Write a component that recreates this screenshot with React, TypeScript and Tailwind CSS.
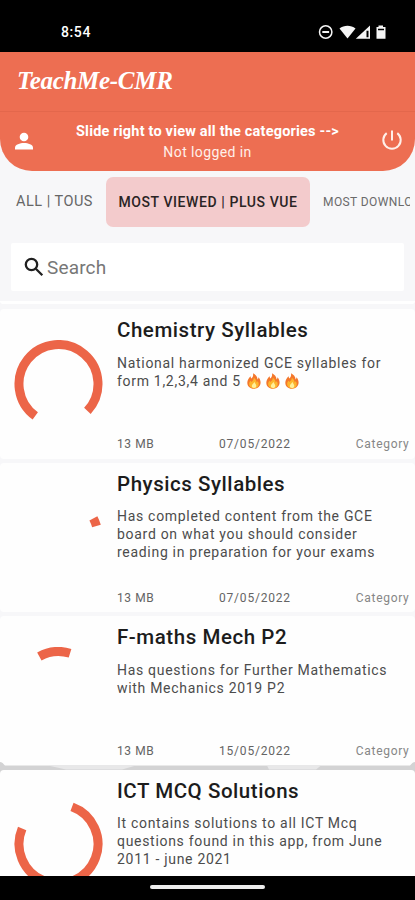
import React from "react";

type Resource = {
  title: string;
  lines: string[];
  flames?: number;
  size?: string;
  date?: string;
  arc: [number, number];
};

const resources: Resource[] = [
  {
    title: "Chemistry Syllables",
    lines: ["National harmonized GCE syllables for", "form 1,2,3,4 and 5"],
    flames: 3,
    size: "13 MB",
    date: "07/05/2022",
    arc: [-234, 43],
  },
  {
    title: "Physics Syllables",
    lines: ["Has completed content from the GCE", "board on what you should consider", "reading in preparation for your exams"],
    size: "13 MB",
    date: "07/05/2022",
    arc: [-28, -16],
  },
  {
    title: "F-maths Mech P2",
    lines: ["Has questions for Further Mathematics", "with Mechanics 2019 P2"],
    size: "13 MB",
    date: "15/05/2022",
    arc: [-119, -73],
  },
  {
    title: "ICT MCQ Solutions",
    lines: ["It contains solutions to all ICT Mcq", "questions found in this app, from June", "2011 - june 2021"],
    arc: [-70, 203],
  },
];

function ProgressArc({ from, to }: { from: number; to: number }) {
  const r = 39.5;
  const point = (deg: number) => {
    const a = (deg * Math.PI) / 180;
    return `${(44.5 + r * Math.cos(a)).toFixed(2)} ${(44 + r * Math.sin(a)).toFixed(2)}`;
  };
  return (
    <svg width="89" height="88" viewBox="0 0 89 88" className="shrink-0">
      <path
        d={`M${point(from)} A${r} ${r} 0 ${to - from > 180 ? 1 : 0} 1 ${point(to)}`}
        fill="none"
        stroke="#ec6548"
        strokeWidth="9"
      />
    </svg>
  );
}

function Flame() {
  return (
    <svg width="16" height="16" viewBox="0 0 16 16" className="shrink-0">
      <path
        d="M7 .3c.5 2.500-.3 3.800-1.700 5.300-.5-.7-.6-1.400-.5-2.300C2.700 4.800 1.300 7.300 1.300 9.800c0 3.500 2.800 6 6.600 6s6.700-2.600 6.700-6.200c0-2.400-1-4-2.100-5.300 0 1-.3 1.800-.9 2.200C11.400 3.900 9.800 1.600 7 .3z"
        fill="#f4772b"
      />
      <path
        d="M7.700 4.800c.3 2-1 3-2.300 4.300l-.8-1.300c-1 1-1.500 2-1.500 3.300 0 2.500 2 4.300 4.800 4.300 2.900 0 4.800-1.800 4.800-4.200 0-1.300-.5-2.300-1.100-3.100-.2.8-.5 1.200-1 1.500.1-1.800-.9-3.700-2.900-4.800z"
        fill="#fdb52d"
      />
      <path
        d="M8.300 8.800c0 1.500-2.500 2.300-2.500 4.300 0 1.200.9 2 2.200 2s2.300-.8 2.300-2.100c0-1.600-1.200-2.300-2-4.200z"
        fill="#fff09a"
      />
    </svg>
  );
}

function Card({ item }: { item: Resource }) {
  return (
    <article className="flex h-[149.5px] shrink-0 rounded-[4px] bg-[#fefefe] pl-[14px] pt-[30.5px]">
      <ProgressArc from={item.arc[0]} to={item.arc[1]} />
      <div className="-mt-[30.5px] ml-[14px] flex grow flex-col pt-[8px]">
        <h2 className="h-[28px] whitespace-nowrap text-[20.5px] font-medium leading-[27px] tracking-[0.55px] text-[#1c1c1c]">
          {item.title}
        </h2>
        <div className="mt-[8.5px] h-[54px] text-[14px] leading-[18px] tracking-[0.7px] text-[#4c4c4c]">
          {item.lines.map((line, i) => (
            <p key={line} className="flex h-[18px] items-center whitespace-nowrap">
              {line}
              {item.flames && i === item.lines.length - 1 && (
                <span className="ml-[5px] flex gap-[3px]">
                  {Array.from({ length: item.flames }, (_, n) => (
                    <Flame key={n} />
                  ))}
                </span>
              )}
            </p>
          ))}
        </div>
        {item.size && (
          <div className="mt-[28.5px] flex h-[16px] pr-[5.5px] text-[12px] leading-[16px] text-[#646464]">
            <span className="w-[102px] tracking-[0.6px]">{item.size}</span>
            <span className="grow tracking-[0.8px]">{item.date}</span>
            <span className="tracking-[0.7px] text-[#868686]">Category</span>
          </div>
        )}
      </div>
    </article>
  );
}

function StatusBar() {
  return (
    <div className="flex h-[52px] shrink-0 items-start justify-between bg-black pl-[61px] pr-[28px] pt-[24px] text-white">
      <span className="text-[14px] font-medium leading-[17px] tracking-[0.6px]">8:54</span>
      <svg width="70" height="16" viewBox="0 0 70 16" fill="#f5f5f5">
        <circle cx="8.700" cy="8" r="6.200" fill="none" stroke="#f5f5f5" strokeWidth="1.500" />
        <path d="M5.300 7h6.800v2H5.300z" />
        <path d="M22.500 4.500c4.500-3.800 11.500-3.800 16 0L30.500 14.500z" />
        <path fillRule="evenodd" d="M38.800 14.800 53 1.500v13.300zM49.500 6.700v6.600h2V6.700z" />
        <path fillRule="evenodd" d="M61.500 1.500h4.500V3h2.500v11.800H59.500V3h2zM61 4.700v1.500h6V4.700z" />
      </svg>
    </div>
  );
}

export default function App() {
  return (
    <div className="flex h-[900px] w-[415px] flex-col overflow-hidden bg-[#f7f7f9] font-['Roboto',sans-serif]">
      <StatusBar />
      <header className="h-[119px] shrink-0 rounded-b-[32px] bg-[#ed6e52] text-white">
        <div className="flex h-[60px] items-center border-b border-[#e3674c] pl-[17px]">
          <h1 className="whitespace-nowrap pb-[2px] font-['Liberation_Serif',serif] text-[25px] font-bold italic leading-[30px] tracking-[-0.3px]">
            TeachMe-CMR
          </h1>
        </div>
        <div className="flex h-[59px] justify-between pl-[15px] pr-[12px]">
          <svg width="18" height="18" viewBox="0 0 18 18" fill="#fff" className="mt-[20px]">
            <circle cx="9" cy="5" r="4.300" />
            <path d="M0 17.500v-2C0 12.500 5 11 9 11s9 1.500 9 4.500v2z" />
          </svg>
          <div className="ml-px flex flex-col items-center whitespace-nowrap pt-[10px] leading-[20px]">
            <p className="text-[14.5px] font-bold tracking-[0.19px]">Slide right to view all the categories --&gt;</p>
            <p className="text-[14px] tracking-[0.4px] text-[#fff0ea]">Not logged in</p>
          </div>
          <svg width="22" height="22" viewBox="0 0 22 22" fill="none" stroke="#fff0ea" strokeWidth="2" className="mt-[17px]">
            <path d="M11 1.500v10M5.700 4.100a8.700 8.700 0 1 0 10.600 0" />
          </svg>
        </div>
      </header>

      <nav className="mt-[6px] flex h-[50px] shrink-0 items-center overflow-hidden whitespace-nowrap pl-[16px] pr-[5px]">
        <span className="w-[90px] shrink-0 text-[14.5px] tracking-[0.5px] text-[#666666]">ALL | TOUS</span>
        <span className="flex h-full w-[204px] shrink-0 items-center justify-center rounded-[7px] bg-[#f3cbcc] text-[14px] font-medium tracking-[0.59px] text-[#2a2424]">
          MOST VIEWED | PLUS VUE
        </span>
        <span className="ml-[13px] overflow-hidden text-[12px] tracking-[0.4px] text-[#6a6a6a]">MOST DOWNLOADED</span>
      </nav>

      <div className="mx-[11px] mt-[16px] flex h-[48px] shrink-0 items-center rounded-[2px] bg-white pl-[13px]">
        <svg width="20" height="20" viewBox="0 0 20 20" fill="none" stroke="#202020" strokeWidth="2.300" className="-mt-[1px]">
          <circle cx="7.500" cy="7.500" r="5.700" />
          <path d="m11.800 11.800 6.500 6.500" />
        </svg>
        <span className="ml-[3px] pt-px text-[19px] leading-[24px] tracking-[0.15px] text-[#777777]">Search</span>
      </div>

      <div className="mt-[10px] h-[3px] shrink-0 rounded-b-[3px] bg-white" />
      <main className="mt-[5px] flex h-[567px] flex-col gap-[4px] overflow-hidden">
        {resources.slice(0, 3).map((item) => (
          <Card key={item.title} item={item} />
        ))}
        <div className="relative">
          <svg width="415" height="14" viewBox="0 0 415 14" className="absolute -top-[8.5px] left-0">
            <path d="M0 1c3 0 3.500 2.500 5 3.500H410c1.500-1 2-3.500 5-3.500v12H0z" fill="#d3d3d4" />
            <path d="M48 4.500h88l-14 4H66zM267 4.500h54l-5 4h-47z" fill="#e8e8e9" />
          </svg>
          <div className="relative">
            <Card item={resources[3]} />
          </div>
        </div>
      </main>
      <footer className="flex h-[24px] shrink-0 justify-center bg-black pt-[9px]">
        <div className="h-[4px] w-[115px] rounded-full bg-[#ededed]" />
      </footer>
    </div>
  );
}
